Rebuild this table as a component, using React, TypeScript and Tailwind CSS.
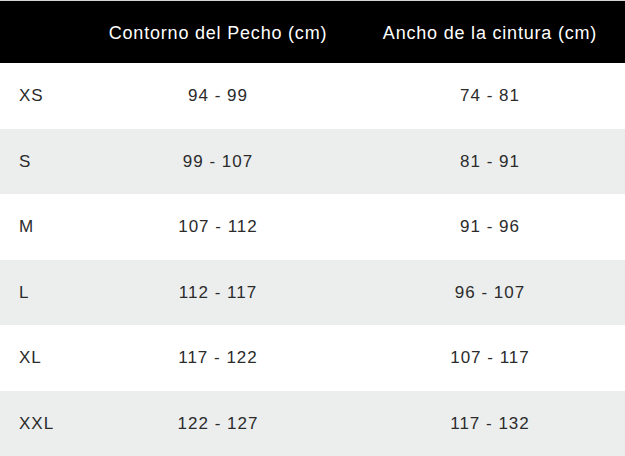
import React from 'react';

const rows = [
  ['XS', '94 - 99', '74 - 81'],
  ['S', '99 - 107', '81 - 91'],
  ['M', '107 - 112', '91 - 96'],
  ['L', '112 - 117', '96 - 107'],
  ['XL', '117 - 122', '107 - 117'],
  ['XXL', '122 - 127', '117 - 132'],
];

export default function App() {
  return (
    <div className="w-[625px] h-[456px] overflow-hidden bg-white font-['Liberation_Sans',Arial,sans-serif]">
      <div className="border-t border-[#d4d4d4]">
        {/* Header */}
        <div className="grid grid-cols-[81px_274px_1fr] h-[62px] items-center bg-black text-white text-[18px] tracking-[0.8px] pt-[3px]">
          <div></div>
          <div className="text-center">Contorno del Pecho (cm)</div>
          <div className="text-center">Ancho de la cintura (cm)</div>
        </div>

        {/* Rows */}
        {rows.map((r, i) => (
          <div
            key={r[0]}
            className={`grid grid-cols-[81px_274px_1fr] h-[65.6px] items-center text-[17px] tracking-[1px] text-[#2b2b2b] ${
              i % 2 === 1 ? 'bg-[#eceeee]' : 'bg-white'
            }`}
          >
            <div className="pl-[19px]">{r[0]}</div>
            <div className="text-center">{r[1]}</div>
            <div className="text-center">{r[2]}</div>
          </div>
        ))}
      </div>
    </div>
  );
}
